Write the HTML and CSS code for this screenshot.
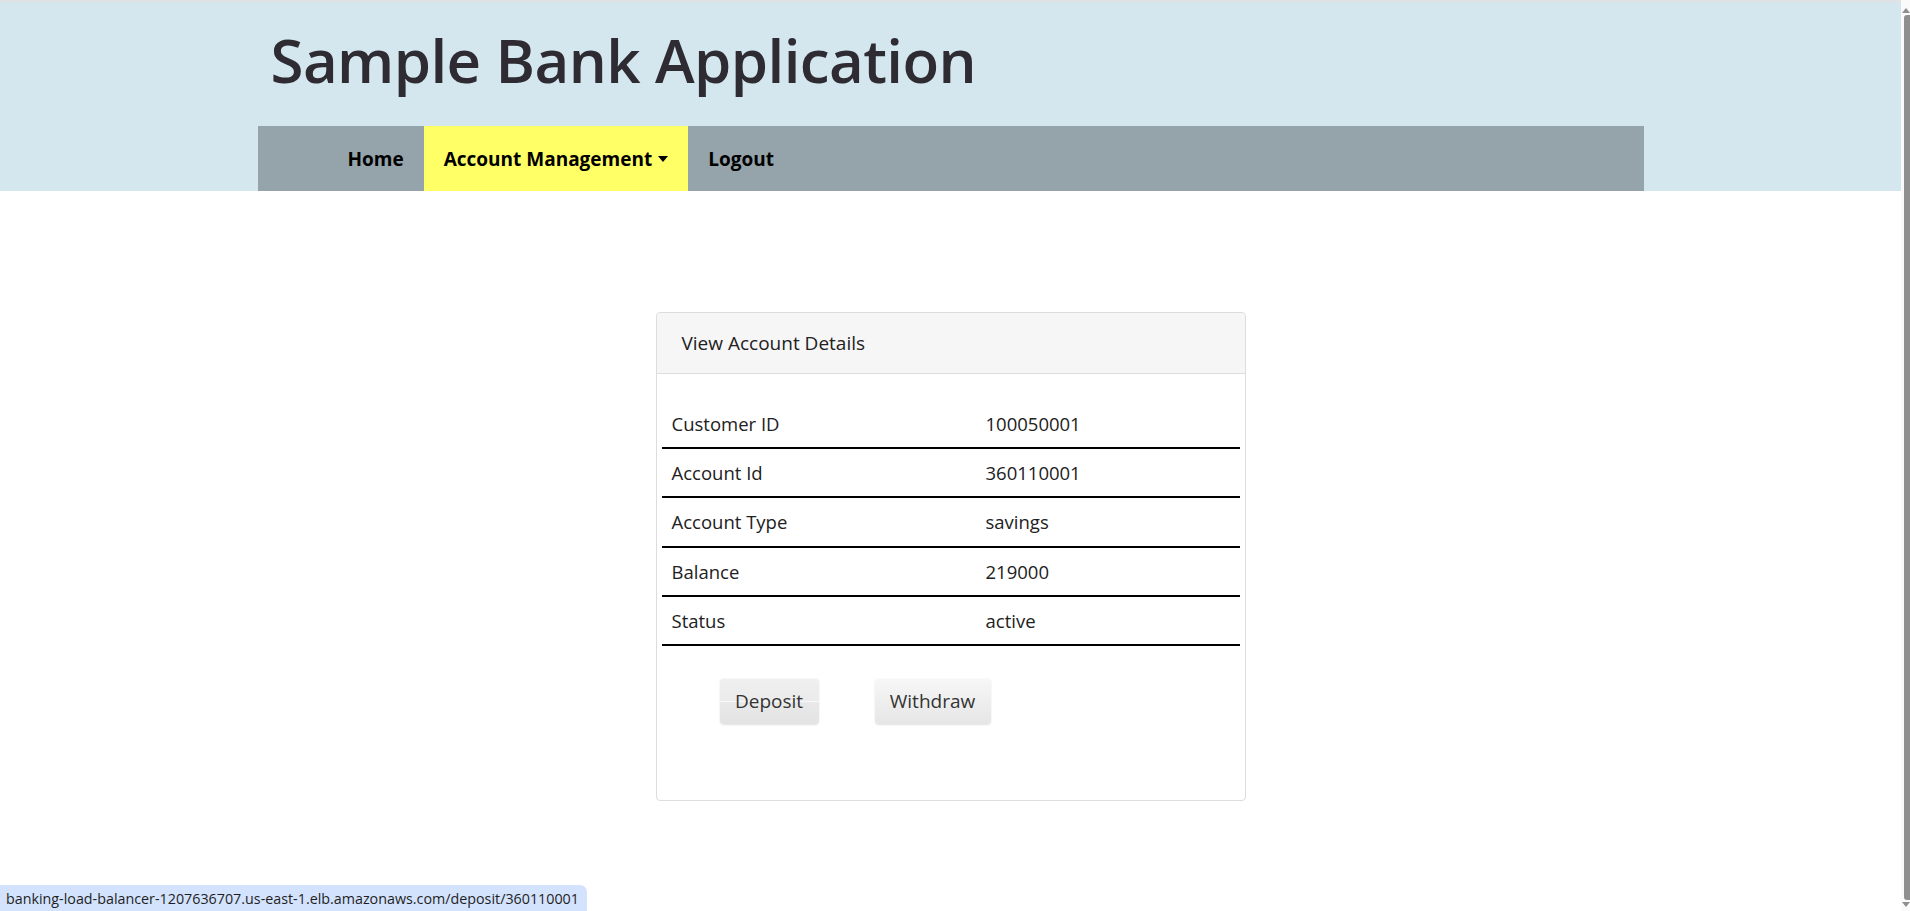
FILE: index.html
```html
<!DOCTYPE html>
<html lang="en">
<head>
<meta charset="utf-8">
<title>Sample Bank Application</title>
<link rel="stylesheet" href="styles.css">
</head>
<body>
<div class="page">
  <header class="masthead">
    <div class="container">
      <h1 class="title">Sample Bank Application</h1>
      <nav class="navbar">
        <ul class="nav-list">
          <li class="nav-item"><a href="#">Home</a></li>
          <li class="nav-item active"><a href="#">Account Management <span class="caret"></span></a></li>
          <li class="nav-item"><a href="#">Logout</a></li>
        </ul>
      </nav>
    </div>
  </header>
  <main class="main">
    <section class="card">
      <div class="card-header">View Account Details</div>
      <div class="card-body">
        <table class="details">
          <tr><td class="label">Customer ID</td><td>100050001</td></tr>
          <tr><td class="label">Account Id</td><td>360110001</td></tr>
          <tr><td class="label">Account Type</td><td>savings</td></tr>
          <tr><td class="label">Balance</td><td>219000</td></tr>
          <tr><td class="label">Status</td><td>active</td></tr>
        </table>
        <div class="actions">
          <button class="btn btn-hover">Deposit</button>
          <button class="btn">Withdraw</button>
        </div>
      </div>
    </section>
  </main>
</div>
<div class="status-bubble">banking-load-balancer-1207636707.us-east-1.elb.amazonaws.com/deposit/360110001</div>
<div class="scrollbar"><div class="scroll-arrow up"></div><div class="scroll-thumb"></div><div class="scroll-arrow down"></div></div>
</body>
</html>
```

FILE: styles.css
```css
html, body {
  margin: 0;
  padding: 0;
  height: 100%;
  overflow: hidden;
  background: #ffffff;
}
body {
  font-family: "Open Sans", "Noto Sans", "Liberation Sans", sans-serif;
  color: #212121;
}
.page {
  margin-right: 9px;
}
.masthead {
  background: #d4e7ee;
  border-top: 2px solid #dfe1e2;
}
.container {
  width: 1386px;
  margin: 0 auto;
}
.title {
  margin: 0;
  height: 124px;
  box-sizing: border-box;
  padding: 15px 0 0 13px;
  font-size: 60px;
  font-weight: 600;
  line-height: 86px;
  color: #2f2b33;
  letter-spacing: -0.6px;
}
.navbar {
  background: #95a3aa;
  height: 65px;
}
.nav-list {
  list-style: none;
  margin: 0;
  padding: 0 0 0 70px;
  display: flex;
  height: 100%;
}
.nav-item a {
  display: flex;
  align-items: center;
  height: 65px;
  padding: 0 20px;
  color: #000;
  text-decoration: none;
  font-weight: 700;
  font-size: 19px;
}
.nav-item.active a {
  background: #ffff66;
}
.caret {
  display: inline-block;
  width: 0;
  height: 0;
  margin-left: 6px;
  border-left: 5px solid transparent;
  border-right: 5px solid transparent;
  border-top: 6px solid #000;
}
.main {
  display: flex;
  justify-content: center;
  padding-top: 121px;
}
.card {
  width: 590px;
  box-sizing: border-box;
  border: 1px solid #dddddd;
  border-radius: 4px;
  background: #fff;
}
.card-header {
  height: 61px;
  box-sizing: border-box;
  display: flex;
  align-items: center;
  padding-left: 25px;
  background: #f6f6f6;
  border-bottom: 1px solid #dddddd;
  border-radius: 4px 4px 0 0;
  font-size: 19px;
  color: #212121;
}
.card-body {
  padding: 26px 5px 76px 5px;
}
.details {
  width: 100%;
  border-collapse: collapse;
  font-size: 18.5px;
}
.details td {
  height: 47.2px;
  padding: 0 10px;
  border-bottom: 2px solid #000;
  vertical-align: middle;
}
.details td.label {
  width: 294px;
}
.actions {
  display: flex;
  gap: 56px;
  padding: 32px 0 0 58px;
}
.btn {
  height: 46px;
  width: 99px;
  padding: 0;
  border: none;
  border-radius: 4px;
  font-family: inherit;
  font-size: 19px;
  color: #333;
  background: linear-gradient(#f7f7f7, #e6e6e6);
  box-shadow: 0 1px 2px rgba(0,0,0,0.12), inset 0 1px 0 rgba(255,255,255,0.6);
  cursor: pointer;
}
.btn + .btn {
  width: 116px;
}
.btn-hover {
  background: linear-gradient(#efefef 0%, #ebebeb 49%, #fafafa 49%, #fafafa 51%, #e9e9e9 52%, #e3e3e3 100%);
}
.status-bubble {
  position: fixed;
  left: 0;
  bottom: 0;
  height: 26px;
  box-sizing: border-box;
  padding: 0 8px 0 6px;
  display: flex;
  align-items: center;
  background: #d3e3fd;
  border-top-right-radius: 7px;
  font-family: "Open Sans", "Noto Sans", sans-serif;
  font-size: 14.3px;
  color: #1f1f1f;
}
.scrollbar {
  position: fixed;
  top: 0;
  right: 0;
  width: 9px;
  height: 100%;
  background: #fafafa;
  display: flex;
  flex-direction: column;
  align-items: flex-end;
}
.scroll-thumb {
  flex: 1;
  width: 6px;
  margin: 2px 0;
  background: #8f8f8f;
  border-radius: 3px 0 0 3px;
}
.scroll-arrow {
  width: 0;
  height: 0;
  border-left: 4px solid transparent;
  border-right: 4px solid transparent;
}
.scroll-arrow.up {
  margin-top: 8px;
  border-bottom: 5px solid #8f8f8f;
}
.scroll-arrow.down {
  margin-bottom: 4px;
  border-top: 5px solid #8f8f8f;
}
```
